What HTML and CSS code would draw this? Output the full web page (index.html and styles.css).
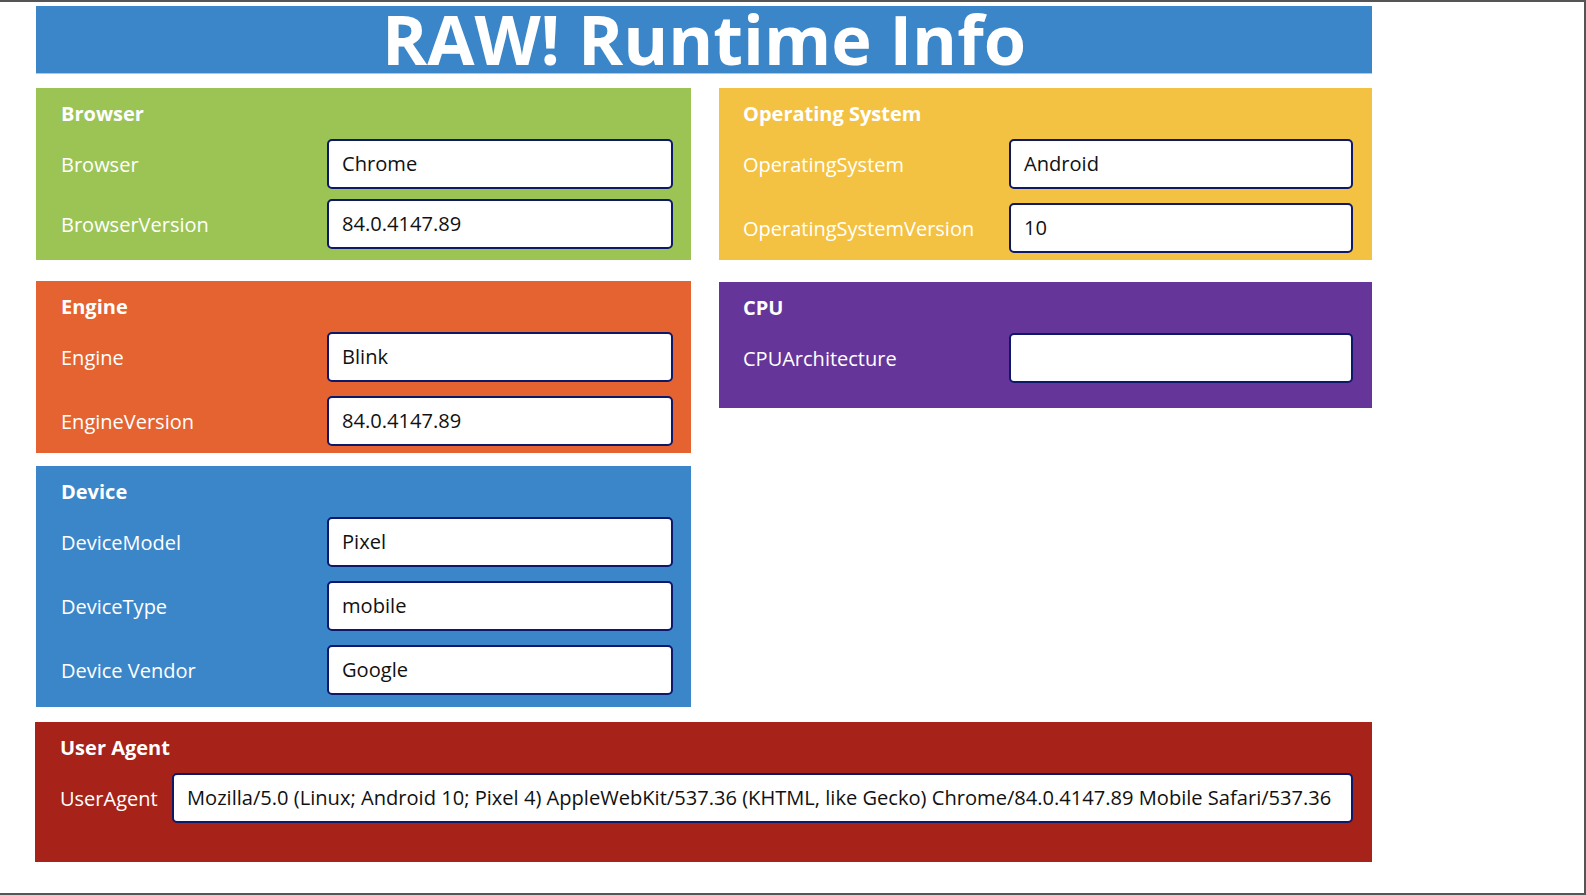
FILE: index.html
```html
<!DOCTYPE html>
<html lang="en">
<head>
<meta charset="utf-8">
<title>RAW! Runtime Info</title>
<link rel="stylesheet" href="styles.css">
</head>
<body>
<div class="screen">
  <header class="banner"><h1 class="banner-title">RAW! Runtime Info</h1></header>

  <div class="columns">
    <div class="col">
      <section class="card card-browser">
        <h2 class="card-title">Browser</h2>
        <div class="rows rows-tight">
          <div class="row"><span class="label">Browser</span><div class="field">Chrome</div></div>
          <div class="row"><span class="label">BrowserVersion</span><div class="field">84.0.4147.89</div></div>
        </div>
      </section>

      <section class="card card-engine">
        <h2 class="card-title">Engine</h2>
        <div class="rows">
          <div class="row"><span class="label">Engine</span><div class="field">Blink</div></div>
          <div class="row"><span class="label">EngineVersion</span><div class="field">84.0.4147.89</div></div>
        </div>
      </section>

      <section class="card card-device">
        <h2 class="card-title">Device</h2>
        <div class="rows">
          <div class="row"><span class="label">DeviceModel</span><div class="field">Pixel</div></div>
          <div class="row"><span class="label">DeviceType</span><div class="field">mobile</div></div>
          <div class="row"><span class="label">Device Vendor</span><div class="field">Google</div></div>
        </div>
      </section>
    </div>

    <div class="col col-right">
      <section class="card card-os">
        <h2 class="card-title">Operating System</h2>
        <div class="rows">
          <div class="row"><span class="label">OperatingSystem</span><div class="field">Android</div></div>
          <div class="row"><span class="label">OperatingSystemVersion</span><div class="field">10</div></div>
        </div>
      </section>

      <section class="card card-cpu">
        <h2 class="card-title">CPU</h2>
        <div class="rows">
          <div class="row"><span class="label">CPUArchitecture</span><div class="field"></div></div>
        </div>
      </section>
    </div>
  </div>

  <section class="card card-ua">
    <h2 class="card-title">User Agent</h2>
    <div class="rows">
      <div class="row row-ua"><span class="label">UserAgent</span><div class="field">Mozilla/5.0 (Linux; Android 10; Pixel 4) AppleWebKit/537.36 (KHTML, like Gecko) Chrome/84.0.4147.89 Mobile Safari/537.36</div></div>
    </div>
  </section>
</div>
</body>
</html>
```

FILE: styles.css
```css
* { box-sizing: border-box; }

html, body {
  margin: 0;
  padding: 0;
  background: #ffffff;
}

body {
  font-family: "Open Sans", "Noto Sans", "Liberation Sans", sans-serif;
  color: #ffffff;
}

.screen {
  width: 1586px;
  height: 895px;
  border-top: 2px solid #555555;
  border-right: 2px solid #555555;
  border-bottom: 2px solid #555555;
  padding: 4px 0 0 36px;
  display: flex;
  flex-direction: column;
}

.banner {
  width: 1336px;
  height: 68px;
  flex: none;
  background: #3b86c8;
  border-bottom: 1px solid #a9c9e8;
  display: flex;
  justify-content: center;
  align-items: flex-start;
}

.banner-title {
  margin: 0;
  font-size: 68.5px;
  line-height: 66px;
  font-weight: 700;
  color: #ffffff;
  white-space: nowrap;
}

.columns {
  display: flex;
  gap: 28px;
  margin-top: 14px;
  align-items: flex-start;
}

.col {
  display: flex;
  flex-direction: column;
  width: 655px;
}

.col-right {
  width: 653px;
}

.card {
  padding: 12px 18px 0 25px;
}

.card-title {
  margin: 0 0 11px;
  font-size: 20px;
  line-height: 28px;
  font-weight: 700;
  color: #ffffff;
}

.rows {
  display: flex;
  flex-direction: column;
  gap: 14px;
}

.rows-tight {
  gap: 10px;
}

.row {
  display: grid;
  grid-template-columns: 266px 1fr;
  align-items: center;
}

.row-ua {
  grid-template-columns: 112px 1fr;
}

.label {
  font-size: 20px;
  line-height: 28px;
  padding-top: 2px;
  color: #ffffff;
}

.field {
  height: 50px;
  background: #ffffff;
  border: 2px solid #0d186a;
  border-radius: 5px;
  padding: 0 13px;
  font-size: 20.1px;
  line-height: 46px;
  color: #111111;
  white-space: nowrap;
  overflow: hidden;
}

.card-browser {
  background: #9bc455;
  height: 172px;
}

.card-engine {
  background: #e46331;
  height: 172px;
  margin-top: 21px;
}

.card-device {
  background: #3b86c8;
  height: 241px;
  margin-top: 13px;
}

.card-os {
  background: #f4c242;
  height: 172px;
  padding-left: 24px;
  padding-right: 19px;
}

.card-cpu {
  background: #65359a;
  height: 126px;
  margin-top: 22px;
  padding-left: 24px;
  padding-right: 19px;
}

.card-ua {
  background: #a72218;
  width: 1337px;
  height: 140px;
  margin-top: 15px;
  margin-left: -1px;
  padding-right: 19px;
}
```
